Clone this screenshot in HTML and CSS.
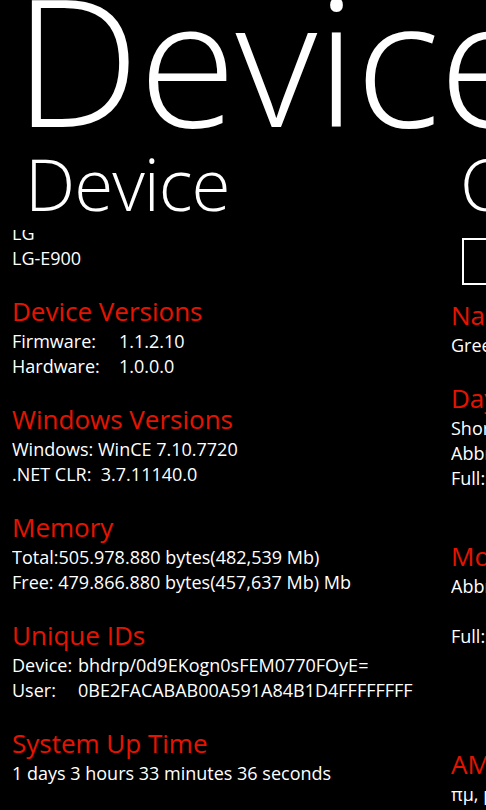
FILE: index.html
```html
<!DOCTYPE html>
<html lang="en">
<head>
<meta charset="utf-8">
<title>Device Info</title>
<link rel="stylesheet" href="styles.css">
</head>
<body>
<div class="panorama">
  <div class="pano-title">Device Info</div>
  <div class="pano-items">
    <section class="item">
      <h2 class="item-title">Device</h2>
      <div class="scroller">
        <div class="scroll-content">
          <div class="group first">
            <div class="line">LG</div>
            <div class="line">LG-E900</div>
          </div>
          <div class="group">
            <h3 class="group-head">Device Versions</h3>
            <div class="line"><span class="lbl w1">Firmware:</span>1.1.2.10</div>
            <div class="line"><span class="lbl w1">Hardware:</span>1.0.0.0</div>
          </div>
          <div class="group">
            <h3 class="group-head">Windows Versions</h3>
            <div class="line">Windows: WinCE 7.10.7720</div>
            <div class="line">.NET CLR:&nbsp; 3.7.11140.0</div>
          </div>
          <div class="group">
            <h3 class="group-head">Memory</h3>
            <div class="line">Total:505.978.880 bytes(482,539 Mb)</div>
            <div class="line">Free: 479.866.880 bytes(457,637 Mb) Mb</div>
          </div>
          <div class="group">
            <h3 class="group-head">Unique IDs</h3>
            <div class="line"><span class="lbl w2">Device:</span>bhdrp/0d9EKogn0sFEM0770FOyE=</div>
            <div class="line"><span class="lbl w2">User:</span>0BE2FACABAB00A591A84B1D4FFFFFFFF</div>
          </div>
          <div class="group">
            <h3 class="group-head">System Up Time</h3>
            <div class="line">1 days 3 hours 33 minutes 36 seconds</div>
          </div>
        </div>
      </div>
    </section>
    <section class="item">
      <h2 class="item-title">Culture</h2>
      <div class="scroller">
        <div class="scroll-content">
          <div class="flag"></div>
          <div class="group">
            <h3 class="group-head">Name</h3>
            <div class="line">Greek (Greece)</div>
          </div>
          <div class="group">
            <h3 class="group-head">Days</h3>
            <div class="line">Short: Κυ, Δε, Τρ, Τε, Πε, Πα, Σα</div>
            <div class="line">Abbr: Κυρ, Δευ, Τρι, Τετ, Πεμ, Παρ, Σαβ</div>
            <div class="line">Full:&nbsp; Κυριακή, Δευτέρα, Τρίτη, Τετάρτη,</div>
            <div class="line">&nbsp;</div>
          </div>
          <div class="group">
            <h3 class="group-head">Months</h3>
            <div class="line">Abbr: Ιαν, Φεβ, Μαρ, Απρ, Μαϊ, Ιουν,</div>
            <div class="line">&nbsp;</div>
            <div class="line">Full:&nbsp; Ιανουάριος, Φεβρουάριος,</div>
            <div class="line">&nbsp;</div>
            <div class="line">&nbsp;</div>
            <div class="line">&nbsp;</div>
          </div>
          <div class="group">
            <h3 class="group-head">AM/PM</h3>
            <div class="line">πμ, μμ</div>
          </div>
        </div>
      </div>
    </section>
  </div>
</div>
</body>
</html>
```

FILE: styles.css
```css
html, body {
  margin: 0;
  padding: 0;
  background: #000;
}
body {
  width: 486px;
  height: 810px;
  overflow: hidden;
  color: #fff;
  font-family: "Open Sans", "Noto Sans", sans-serif;
}
.panorama {
  width: 486px;
  height: 810px;
  overflow: hidden;
}
.pano-title {
  font-weight: 300;
  font-size: 178px;
  line-height: 116px;
  height: 116px;
  white-space: nowrap;
  padding-left: 14px;
  letter-spacing: -1px;
}
.pano-items {
  display: flex;
  width: 1000px;
}
.item {
  flex: 0 0 439px;
  width: 439px;
  box-sizing: border-box;
  padding-left: 12px;
}
.item-title {
  margin: 28px 0 0 13px;
  font-weight: 300;
  font-size: 71px;
  line-height: 80px;
  height: 80px;
  letter-spacing: -1px;
  white-space: nowrap;
}
.item + .item .item-title {
  margin-left: 9px;
}
.scroller {
  margin-top: 6px;
  height: 600px;
  overflow: hidden;
}
.scroll-content {
  white-space: nowrap;
}
.group {
  margin-bottom: 23px;
}
.group.first {
  margin-top: -9px;
}
.group-head {
  margin: 0;
  font-weight: 400;
  font-size: 26px;
  line-height: 35px;
  color: #e51400;
}
.line {
  font-size: 18px;
  line-height: 25px;
}
.lbl {
  display: inline-block;
}
.w1 { width: 107px; }
.w2 { width: 66px; }
.flag {
  margin: 8px 0 13px 11px;
  width: 80px;
  height: 47px;
  box-sizing: border-box;
  border: 2px solid #fff;
}
```
